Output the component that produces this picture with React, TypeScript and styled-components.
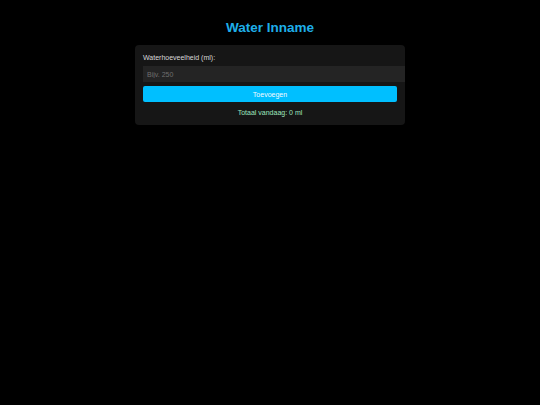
import styled, { createGlobalStyle } from 'styled-components';
import { useState } from 'react';

const Global = createGlobalStyle`
  html, body {
    margin: 0;
    padding: 0;
    background: #000;
    font-family: "Liberation Sans", Arial, sans-serif;
  }
`;

const Page = styled.div`
  padding-top: 20px;
`;

const Title = styled.h1`
  margin: 0 0 9px;
  text-align: center;
  font-size: 13.5px;
  line-height: 16px;
  font-weight: 700;
  color: #1eaee8;
`;

const Card = styled.div`
  width: 254px;
  margin: 0 auto;
  padding: 8px;
  background: #161616;
  border-radius: 4px;
`;

const Label = styled.label`
  display: block;
  font-size: 7px;
  line-height: 9px;
  color: #d8d8d8;
  margin-bottom: 4px;
`;

const Input = styled.input`
  display: block;
  box-sizing: content-box;
  width: 100%;
  height: 16px;
  padding: 0 4px;
  margin: 0 0 4px;
  border: none;
  outline: none;
  background: #242424;
  color: #ddd;
  font-family: inherit;
  font-size: 7px;
  &::placeholder {
    color: #6f6f6f;
  }
`;

const Button = styled.button`
  display: block;
  width: 100%;
  height: 16px;
  padding: 0;
  border: none;
  border-radius: 2px;
  background: #00bfff;
  color: #f4fbff;
  font-family: inherit;
  font-size: 7px;
  cursor: pointer;
`;

const Total = styled.div`
  margin-top: 6px;
  text-align: center;
  font-size: 7px;
  line-height: 9px;
  color: #9ee6be;
`;

export default function App() {
  const [amount, setAmount] = useState('');
  const [total, setTotal] = useState(0);
  return (
    <Page>
      <Global />
      <Title>Water Inname</Title>
      <Card>
        <Label>Waterhoeveelheid (ml):</Label>
        <Input
          type="number"
          placeholder="Bijv. 250"
          value={amount}
          onChange={(e) => setAmount(e.target.value)}
        />
        <Button
          onClick={() => {
            const n = parseInt(amount, 10);
            if (!isNaN(n)) setTotal(total + n);
            setAmount('');
          }}
        >
          Toevoegen
        </Button>
        <Total>Totaal vandaag: {total} ml</Total>
      </Card>
    </Page>
  );
}
